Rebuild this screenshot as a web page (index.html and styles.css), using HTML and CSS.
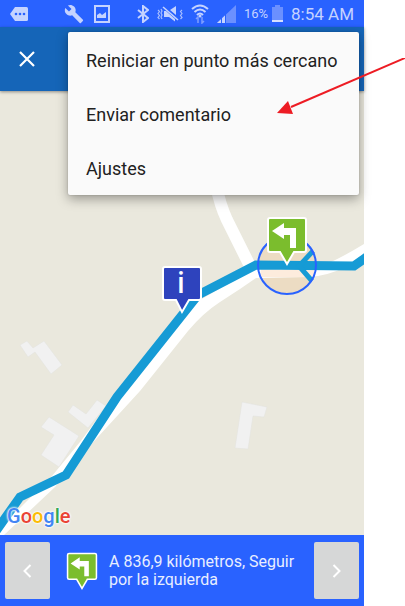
FILE: index.html
```html
<!DOCTYPE html>
<html lang="es">
<head>
  <meta charset="UTF-8" />
  <meta name="viewport" content="width=device-width, initial-scale=1.0"/>
  <title>Navegación</title>
  <link rel="stylesheet" href="styles.css">
</head>
<body>

  <div class="phone">
    <div class="status">
      <svg class="more" width="18" height="14" viewBox="0 0 18 14"><path d="M5 0H16.500Q18 0 18 1.500V12.500Q18 14 16.500 14H5L0 7Z" fill="#c5d3ff"/><g fill="#2962ff"><circle cx="6" cy="7" r="1.300"/><circle cx="10" cy="7" r="1.300"/><circle cx="14" cy="7" r="1.300"/></g></svg>
      <svg width="20" height="20" viewBox="0 0 24 24"><path fill="#c5d3ff" d="M22.700 19l-9.100-9.100c.9-2.300.4-5-1.500-6.900-2-2-5-2.400-7.400-1.300L9 6 6 9 1.600 4.700C.4 7.100.9 10.100 2.900 12.100c1.900 1.900 4.600 2.400 6.900 1.500l9.100 9.100c.4.4 1 .4 1.400 0l2.300-2.300c.5-.4.5-1.100.1-1.400z"/></svg>
      <svg width="16" height="18" viewBox="0 0 16 18"><path d="M1 1H15V17H1Z" fill="none" stroke="#c5d3ff" stroke-width="2"/><path d="M3 13V10L6 8 8 10 12 7V13Z" fill="#c5d3ff"/></svg>

      <div class="signals">
        <svg width="12" height="18" viewBox="0 0 12 18"><path d="M1 5L11 13 6 17V1L11 5 1 13" fill="none" stroke="#c5d3ff" stroke-width="2"/></svg>
        <svg width="26" height="16" viewBox="0 0 26 16"><g fill="none" stroke="#a9bfff" stroke-width="1.200"><path d="M1 4L2.500 5.500 1 7.500 2.500 9.500 1 11.500 2.500 13M4 3L5 5 4 7 5 9 4 11 5 13M25 4L23.500 5.500 25 7.500 23.500 9.500 25 11.500 23.500 13"/></g><path d="M7 5V11H12L18 15.500V13L9 5ZM13 4L19 0V9Z" fill="#c5d3ff"/><path d="M6 1L21 14" stroke="#c5d3ff" stroke-width="1.600"/></svg>
        <svg width="18" height="20" viewBox="0 0 18 20"><g fill="none" stroke="#c5d3ff" stroke-width="2"><path d="M1 5Q9-2 17 5M3.500 8Q9 3 14.500 8M6 11Q9 8 12 11"/></g><circle cx="9" cy="12" r="1.500" fill="#c5d3ff"/><path d="M7 19V13L5 15M11 13V19L13 17" fill="none" stroke="#7f9eff" stroke-width="1.500"/></svg>
        <svg width="19" height="18" viewBox="0 0 19 18"><path d="M0 18L19 0V18Z" fill="#6b90ff"/><path d="M0 18L9 9.500V18Z" fill="#c5d3ff"/><path d="M4.500 13V18M8.500 8V18" stroke="#2962ff"/></svg>
        <span class="percent">16%</span>
        <svg class="battery" width="11" height="17" viewBox="0 0 11 17"><path d="M0 2H3V0H8V2H11V17H0Z" fill="#6b90ff"/><path d="M0 15H11V17H0Z" fill="#d5dfff"/></svg>
        <span class="time">8:54 AM</span>
      </div>
    </div>

    <header class="appbar">
      <button class="close" aria-label="Cerrar">
        <svg width="16" height="16" viewBox="0 0 16 16"><path d="M1 1L15 15M15 1L1 15" stroke="#fff" stroke-width="2.200"/></svg>
      </button>
    </header>

    <div class="map">
      <svg class="tiles" viewBox="0 91 364 444" preserveAspectRatio="xMinYMin slice">
        <!-- buildings -->
        <g fill="#f1f1f1" stroke="#e2e2df" stroke-width="0.500">
          <path d="M20 345L27 341 33 348 44 341 62 365 51 374 35 352 28 357Z"/>
          <path d="M68 412L73 405 86 414 97 400 106 406 88 428Z"/>
          <path d="M41 427L49 417 79 436 59 467 41 455 54 435Z"/>
          <path d="M242 402L267 407 264 417 253 416 248 449 235 448Z"/>
        </g>
        <circle cx="287" cy="265" r="29" fill="#ecdcc3"/>
        <!-- roads -->
        <path d="M216 185Q220 205 227 220L250 266" fill="none" stroke="#fff" stroke-width="12"/>
        <path d="M364 254L345 267Q330 275 310 277L256 278 240 289 220 302Q203 313 188 331L140 391 86 450 55 487 4 535H0V524L20 508 52 476 80 442 130 375 185 315 200 300 255 268H315Q333 263 364 244Z" fill="#fff"/>
        <path d="M261 268H314L314 277H260Z" fill="#fdecdd"/>
        <!-- route -->
        <path d="M-4 531L20 497 66 475 117 397 198 295 256 265 354 266 368 256" fill="none" stroke="#169bd5" stroke-width="9"/>
        <path d="M313 251L299 266 312 281" fill="none" stroke="#169bd5" stroke-width="5"/>
        <circle cx="287" cy="265" r="29" fill="none" stroke="#2962ff" stroke-width="2"/>
        <!-- turn marker -->
        <path d="M270 218H304Q306 218 306 220V250Q306 252 304 252H294L287 264 280 252H270Q268 252 268 250V220Q268 218 270 218Z" fill="#7bbd2d" stroke="#fff" stroke-width="2"/>
        <path d="M272 231L284 223V228H296V248H290V235H284V239Z" fill="#fff"/>
        <!-- info marker -->
        <path d="M165 267H199Q201 267 201 269V298Q201 300 199 300H189L182 312 176 300H165Q163 300 163 298V269Q163 267 165 267Z" fill="#2e43bd" stroke="#fff" stroke-width="2"/>
        <text class="info" x="181" y="293" text-anchor="middle">i</text>
      </svg>
      <div class="google"><span class="blue">G</span><span class="red">o</span><span class="yellow">o</span><span class="blue">g</span><span class="green">l</span><span class="red">e</span></div>
    </div>

    <footer class="directions">
      <button class="step" aria-label="Anterior">
        <svg width="9" height="14" viewBox="0 0 9 14"><path d="M7.500 1L1.500 7 7.500 13" fill="none" stroke="#fff" stroke-width="2"/></svg>
      </button>
      <svg class="turn" width="32" height="38" viewBox="266 216 42 50"><path d="M270 218H304Q306 218 306 220V250Q306 252 304 252H294L287 264 280 252H270Q268 252 268 250V220Q268 218 270 218Z" fill="#7bbd2d" stroke="#fff" stroke-width="2"/><path d="M272 231L284 223V228H296V248H290V235H284V239Z" fill="#fff"/></svg>
      <p>A 836,9 kilómetros, Seguir por la izquierda</p>
      <button class="step" aria-label="Siguiente">
        <svg width="9" height="14" viewBox="0 0 9 14"><path d="M1.500 1L7.500 7 1.500 13" fill="none" stroke="#fff" stroke-width="2"/></svg>
      </button>
    </footer>

    <div class="menu">
      <button>Reiniciar en punto más cercano</button>
      <button>Enviar comentario</button>
      <button>Ajustes</button>
    </div>
  </div>

  <svg class="pointer" width="128" height="60" viewBox="0 0 128 60">
    <path d="M128 0L14 49" stroke="#ed1c24" stroke-width="2"/>
    <path d="M0 55L11 43 16 56Z" fill="#ed1c24"/>
  </svg>

</body>
</html>
```
FILE: styles.css
```css
* {
  box-sizing: border-box;
}
body {
  position: relative;
  margin: 0;
  padding-right: 41px;
  background: #fff;
  font-family: Roboto, sans-serif;
}
svg {
  display: block;
  flex-shrink: 0;
}
button {
  border: none;
  padding: 0;
  font-family: inherit;
  cursor: pointer;
}
.phone {
  position: relative;
  display: flex;
  flex-direction: column;
  min-height: 100vh;
}
.status {
  display: flex;
  align-items: center;
  gap: 10px;
  height: 27px;
  padding: 0 10px;
  background: #2962ff;
  color: #c5d3ff;
}
.more {
  margin-right: 26px;
}
.signals {
  display: flex;
  align-items: center;
  gap: 8px;
  margin-left: auto;
}
.percent {
  font-size: 13px;
}
.battery {
  margin-left: -4px;
}
.time {
  font-size: 17px;
}
.appbar {
  position: relative;
  z-index: 1;
  display: flex;
  align-items: center;
  height: 64px;
  padding-left: 11px;
  background: #1565b8;
  box-shadow: 0 1px 3px rgba(0,0,0,0.4);
}
.close {
  display: flex;
  align-items: center;
  justify-content: center;
  width: 32px;
  height: 32px;
  background: none;
}
.map {
  position: relative;
  flex: 1;
  background: #eae8dd;
  overflow: hidden;
}
.tiles {
  position: absolute;
  width: 100%;
  height: 100%;
}
.info {
  font-family: "Open Sans", sans-serif;
  font-size: 28px;
  font-weight: 600;
  fill: #fff;
}
.google {
  position: absolute;
  left: 7px;
  bottom: 7px;
  font-size: 20px;
  line-height: 24px;
  font-weight: 500;
  text-shadow: 0 0 2px #fff, 0 0 2px #fff, 0 0 3px #fff;
}
.blue {
  color: #4285f4;
}
.red {
  color: #ea4335;
}
.yellow {
  color: #fbbc05;
}
.green {
  color: #34a853;
}
.directions {
  display: flex;
  align-items: center;
  height: 71px;
  padding: 0 5px;
  background: #2962ff;
  color: #e8eeff;
}
.directions p {
  flex: 1;
  margin: 0 12px 0 11px;
  font-size: 16px;
  line-height: 18px;
}
.turn {
  margin-left: 16px;
}
.step {
  display: flex;
  align-items: center;
  justify-content: center;
  width: 45px;
  height: 57px;
  border-radius: 2px;
  background: #d6d7d7;
}
.menu {
  position: absolute;
  z-index: 2;
  top: 32px;
  right: 5px;
  left: 68px;
  padding-top: 1px;
  border-radius: 2px;
  background: #fafafa;
  box-shadow: 0 4px 12px rgba(0,0,0,0.35), 0 0 2px rgba(0,0,0,0.2);
}
.menu button {
  display: block;
  width: 100%;
  height: 54px;
  padding-left: 18px;
  background: none;
  color: #212121;
  font-size: 18px;
  text-align: left;
}
.pointer {
  position: absolute;
  z-index: 3;
  top: 58px;
  right: 0;
}
```
